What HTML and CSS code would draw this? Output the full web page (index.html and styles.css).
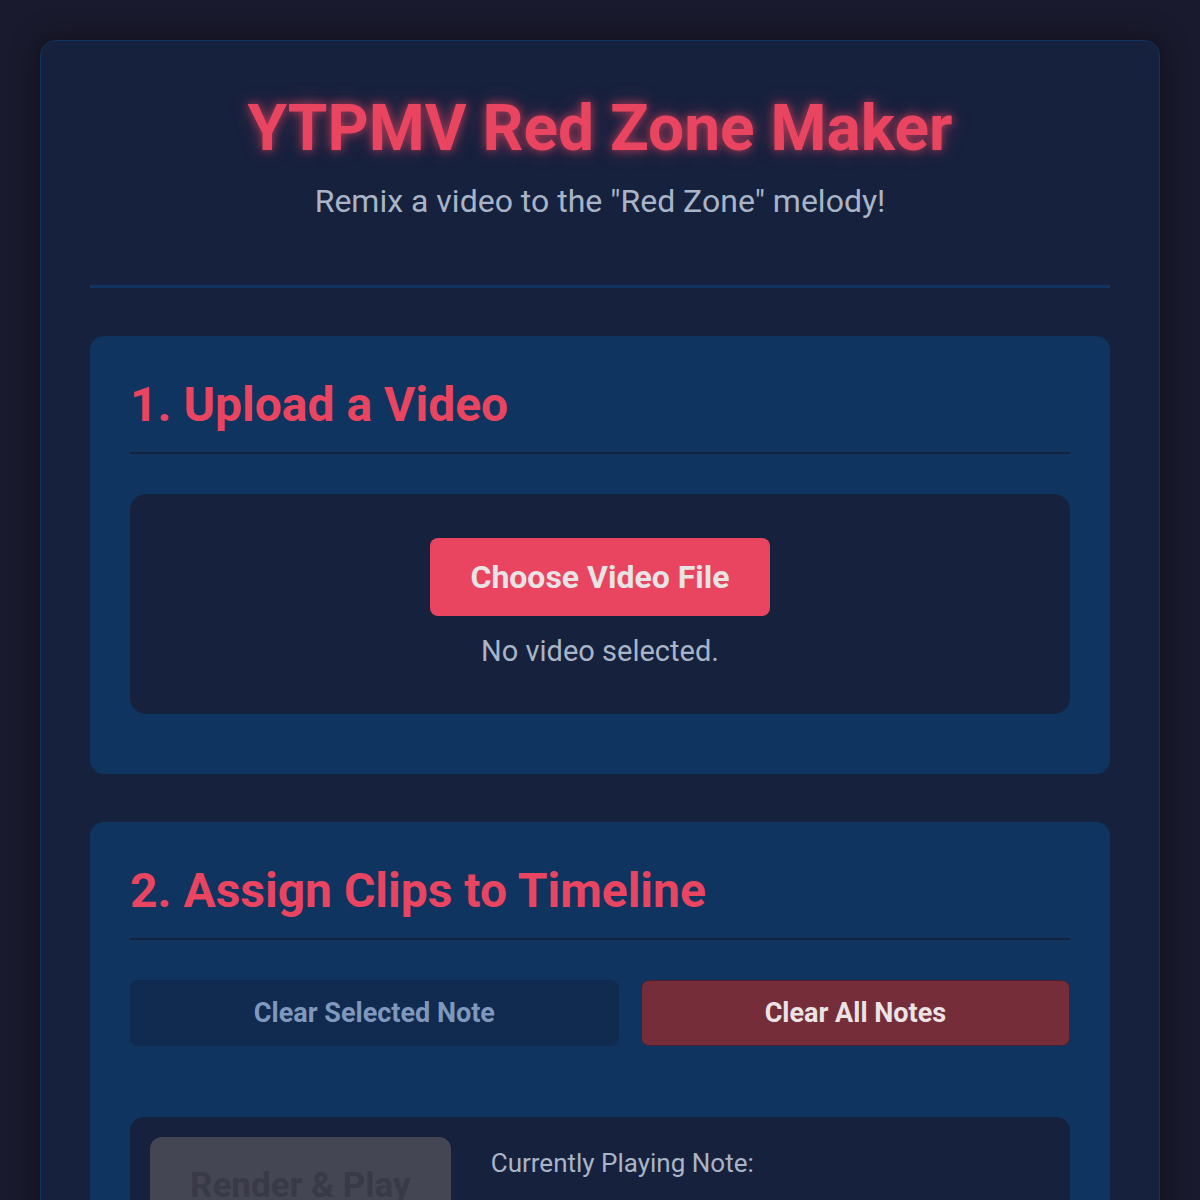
FILE: index.html
```html
<!DOCTYPE html>
<html lang="en">
<head>
<meta charset="utf-8">
<title>YTPMV Red Zone Maker</title>
<link rel="stylesheet" href="styles.css">
</head>
<body>
<div class="container">
  <header class="header">
    <h1 class="title">YTPMV Red Zone Maker</h1>
    <p class="subtitle">Remix a video to the "Red Zone" melody!</p>
  </header>

  <section class="section">
    <h2 class="section-title">1. Upload a Video</h2>
    <div class="upload-area">
      <button class="btn-primary">Choose Video File</button>
      <p class="file-status">No video selected.</p>
    </div>
  </section>

  <section class="section">
    <h2 class="section-title">2. Assign Clips to Timeline</h2>
    <div class="clip-actions">
      <button class="btn-secondary" disabled>Clear Selected Note</button>
      <button class="btn-danger">Clear All Notes</button>
    </div>
    <div class="player-panel">
      <button class="btn-render" disabled>Render &amp; Play</button>
      <div class="now-playing">Currently Playing Note:</div>
    </div>
  </section>
</div>
</body>
</html>
```

FILE: styles.css
```css
html, body {
  margin: 0;
  padding: 0;
}

body {
  background: #1a1a2e;
  font-family: Roboto, "Liberation Sans", Arial, sans-serif;
  color: #e0e0e0;
  padding: 40px;
  box-sizing: border-box;
  min-height: 100vh;
}

.container {
  background: #16213e;
  border: 1px solid #0f3460;
  border-radius: 16px;
  padding: 50px 49px;
  box-shadow: 0 0 30px rgba(0, 0, 0, 0.45);
}

.header {
  text-align: center;
  border-bottom: 3px solid #0f3460;
  padding-bottom: 65px;
  margin-bottom: 48px;
}

.title {
  margin: 0;
  font-size: 64px;
  font-weight: 700;
  color: #e94560;
  text-shadow: 0 0 10px rgba(233, 69, 96, 0.7), 0 0 20px rgba(233, 69, 96, 0.35);
}

.subtitle {
  margin: 16px 0 0;
  font-size: 32px;
  color: #a9b4c6;
}

.section {
  background: #0f3460;
  border-radius: 14px;
  padding: 40px;
  margin-bottom: 48px;
}

.section-title {
  margin: 0 0 40px;
  font-size: 48px;
  font-weight: 700;
  color: #e94560;
  padding-bottom: 19px;
  border-bottom: 2px solid #16213e;
}

.upload-area {
  background: #16213e;
  border-radius: 16px;
  padding: 44px 40px 46px;
  margin-bottom: 20px;
  display: flex;
  flex-direction: column;
  align-items: center;
}

.btn-primary {
  font-family: inherit;
  font-size: 32px;
  font-weight: 700;
  color: #e8e4e6;
  background: #e94560;
  border: none;
  border-radius: 8px;
  padding: 20px 40px;
  cursor: pointer;
}

.file-status {
  margin: 18px 0 0;
  font-size: 29px;
  color: #a9b4c6;
}

.clip-actions {
  display: flex;
  gap: 22px;
  margin-bottom: 71px;
}

.clip-actions button {
  flex: 1 1 auto;
  font-family: inherit;
  font-size: 27px;
  font-weight: 700;
  border-radius: 8px;
  padding: 16px 20px;
}

.btn-secondary {
  background: #112a50;
  color: #7f98bb;
  border: 1px solid #112a50;
}

.btn-danger {
  background: #752d3a;
  color: #ebe3e4;
  border: 1px solid #4a1f33;
}

.player-panel {
  background: #16213e;
  border-radius: 14px;
  padding: 20px;
  display: flex;
  align-items: flex-start;
  gap: 40px;
}

.btn-render {
  font-family: inherit;
  font-size: 35px;
  font-weight: 700;
  color: #393a48;
  background: #454653;
  border: none;
  border-radius: 12px;
  padding: 28px 40px;
}

.now-playing {
  padding-top: 11px;
  font-size: 26px;
  color: #a9b4c6;
}
```
